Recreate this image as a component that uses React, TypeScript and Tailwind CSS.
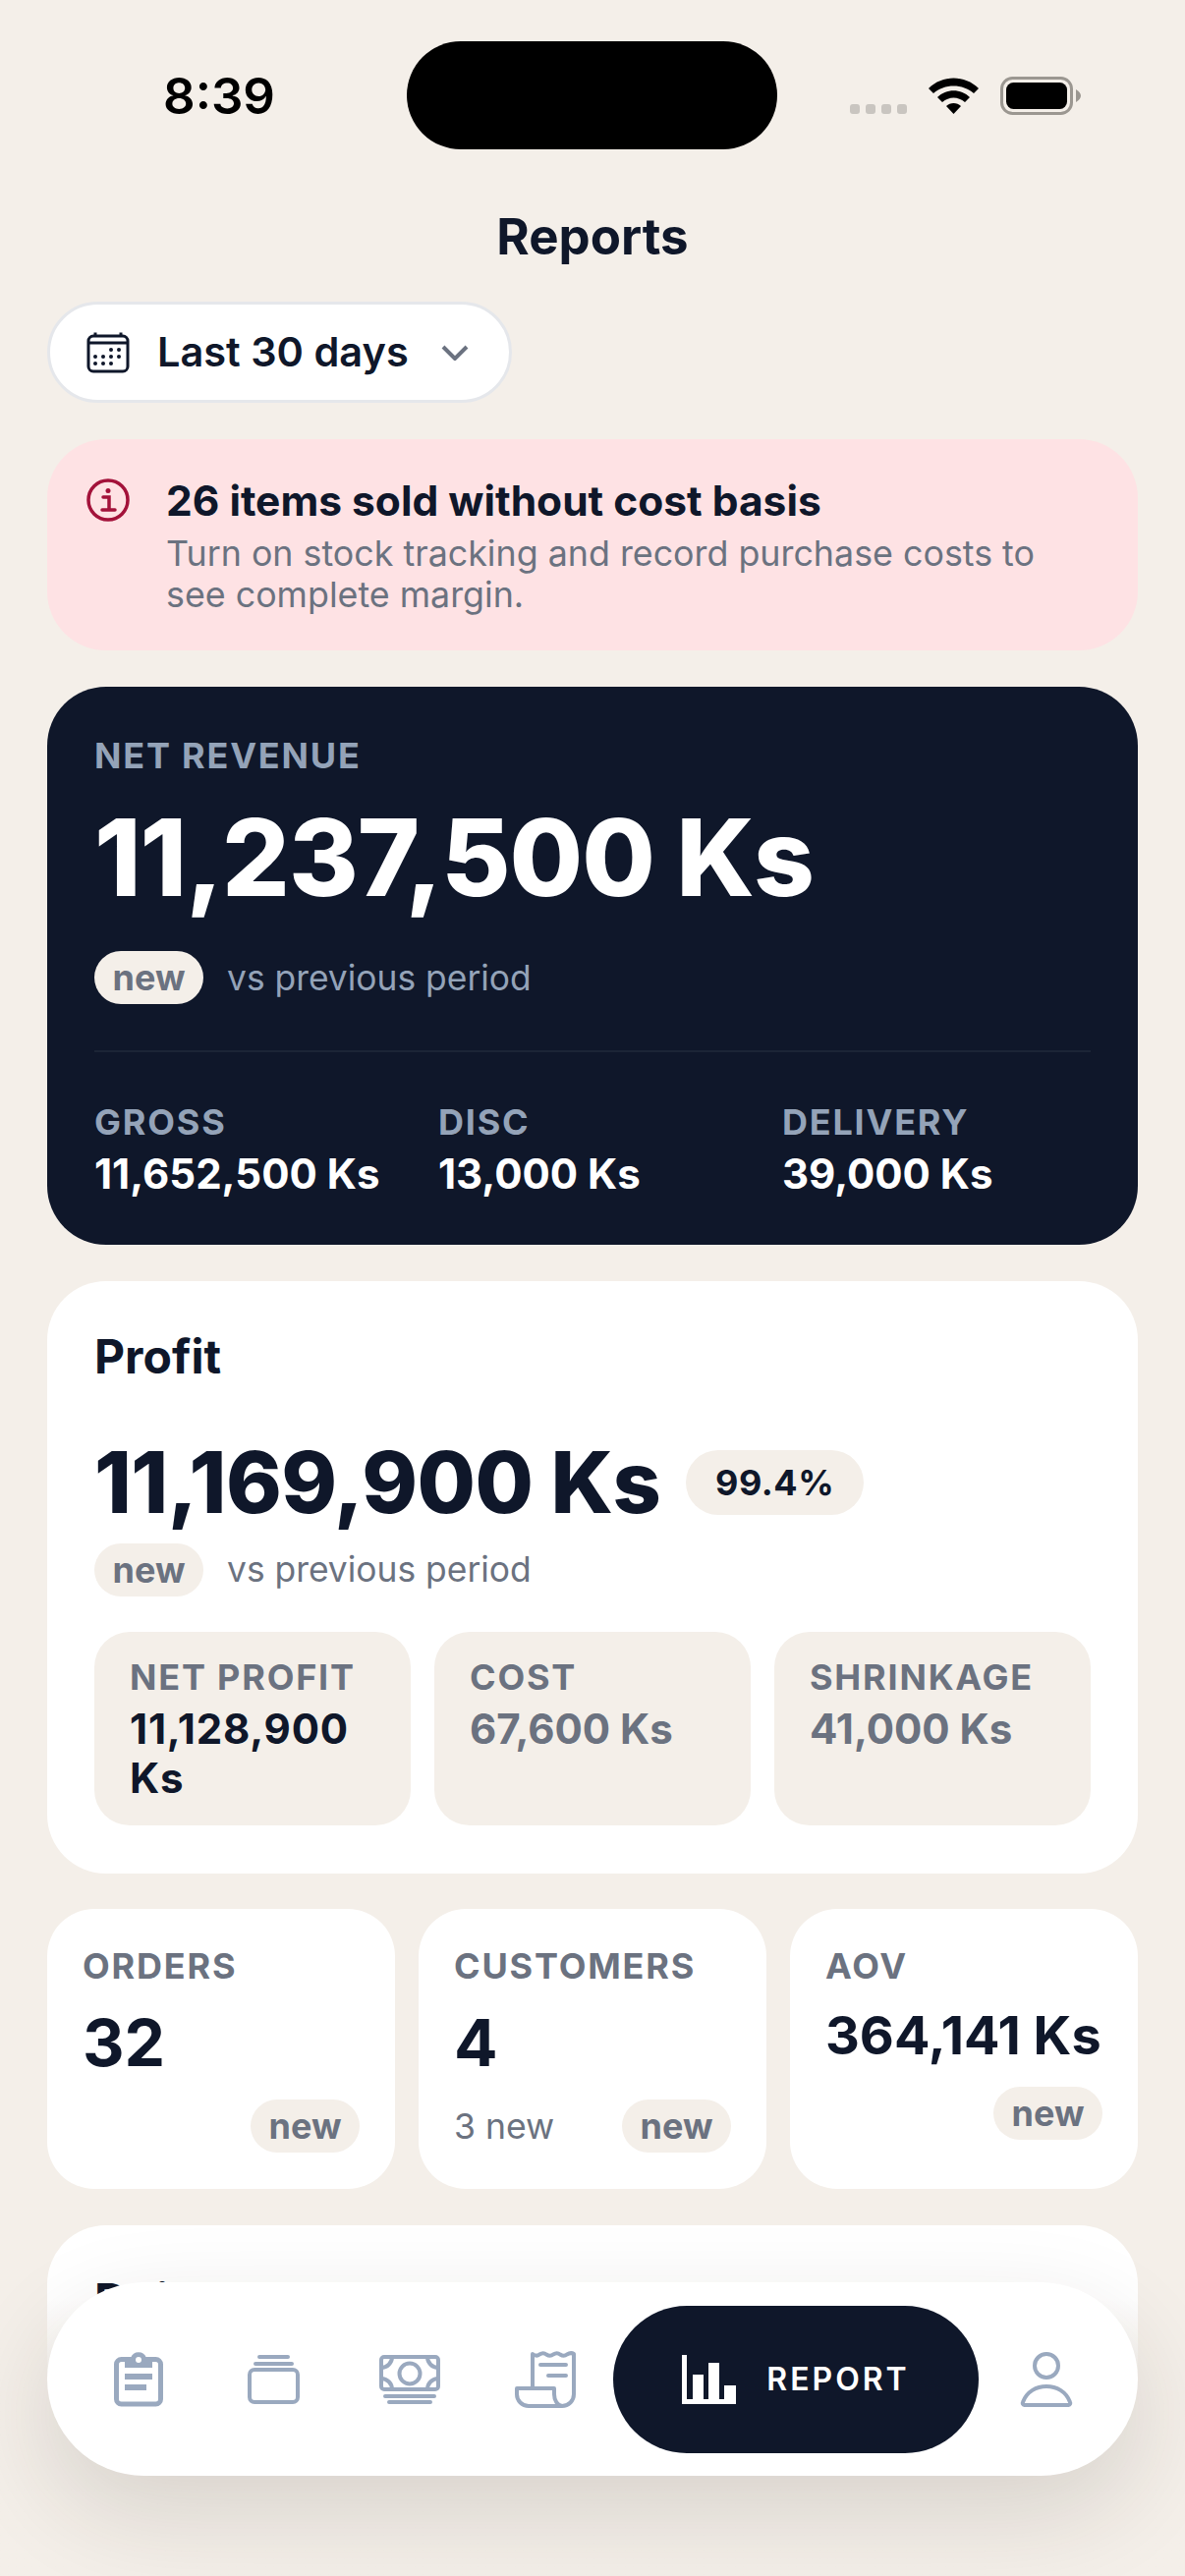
import type { ReactNode } from "react";

const font = "font-['Inter',sans-serif]";

function NewBadge({ className }: { className?: string }) {
  return (
    <span
      className={`inline-flex h-[54px] w-[111px] items-center justify-center rounded-full bg-[#f4efe9] text-[36px] font-bold text-[#6b7280] ${className ?? ""}`}
    >
      new
    </span>
  );
}

function StatusBar() {
  return (
    <div className="relative h-[152px]">
      <span className="absolute left-[166px] top-[70px] text-[51px] leading-[56px] font-semibold text-black">
        8:39
      </span>
      <div className="absolute left-[414px] top-[42px] h-[110px] w-[377px] rounded-full bg-black" />
      <div className="absolute left-[865px] top-[106px] flex gap-[6px]">
        <i className="block h-[10px] w-[10px] rounded-[3px] bg-[#c9c5c0]" />
        <i className="block h-[10px] w-[10px] rounded-[3px] bg-[#c9c5c0]" />
        <i className="block h-[10px] w-[10px] rounded-[3px] bg-[#c9c5c0]" />
        <i className="block h-[10px] w-[10px] rounded-[3px] bg-[#c9c5c0]" />
      </div>
      <svg className="absolute left-[945px] top-[79px]" width="51" height="37" viewBox="0 0 51 37">
        <path d="M0 11 C14 -3 37 -3 51 11 L46 16 C35 6 16 6 5 16 Z" fill="#000" />
        <path d="M9 20 C18 11 33 11 42 20 L37 25 C30 19 21 19 14 25 Z" fill="#000" />
        <path d="M18 29 C22 25 29 25 33 29 L25.5 37 Z" fill="#000" />
      </svg>
      <svg className="absolute left-[1018px] top-[78px]" width="82" height="39" viewBox="0 0 82 39">
        <rect x="1.5" y="1.5" width="71" height="36" rx="11" fill="none" stroke="#9b9791" strokeWidth="3" />
        <rect x="6" y="6" width="62" height="27" rx="7.5" fill="#000" />
        <path d="M77 13 C80 15 82 17 82 19.5 C82 22 80 24 77 26 Z" fill="#9b9791" />
      </svg>
    </div>
  );
}

function AmountLabel({ children, className }: { children: ReactNode; className?: string }) {
  return <div className={`text-[36px] leading-[44px] font-bold tracking-[1.8px] ${className ?? ""}`}>{children}</div>;
}

function HeroCard() {
  return (
    <section className="mx-[48px] mt-[37px] h-[568px] rounded-[60px] bg-[#0f172a] px-[48px] pt-[48px]">
      <AmountLabel className="text-[#94a3b8]">NET REVENUE</AmountLabel>
      <div className="mt-[21px] text-[108px] leading-[122px] font-extrabold tracking-[-1.1px] text-white">11,237,500 Ks</div>
      <div className="mt-[33px] flex items-center gap-[24px]">
        <NewBadge />
        <span className="mt-[2px] text-[35.4px] text-[#94a3b8]">vs previous period</span>
      </div>
      <div className="mt-[47px] h-[2px] bg-[#1c2536]" />
      <div className="mt-[49px] grid grid-cols-3 gap-[36px]">
        {[
          ["GROSS", "11,652,500 Ks"],
          ["DISC", "13,000 Ks"],
          ["DELIVERY", "39,000 Ks"],
        ].map(([label, value]) => (
          <div key={label}>
            <AmountLabel className="text-[#94a3b8]">{label}</AmountLabel>
            <div className="mt-[6px] text-[42px] leading-[50px] font-bold whitespace-nowrap text-white">{value}</div>
          </div>
        ))}
      </div>
    </section>
  );
}

function ProfitCard() {
  return (
    <section className="mx-[48px] mt-[37px] h-[603px] rounded-[60px] bg-white px-[48px] pt-[48px]">
      <div className="text-[48px] leading-[58px] font-bold text-[#0f172a]">Profit</div>
      <div className="mt-[49px] flex items-center gap-[26px]">
        <span className="text-[86px] leading-[100px] font-extrabold tracking-[-0.6px] text-[#0f172a]">11,169,900 Ks</span>
        <span className="flex h-[66px] w-[181px] items-center justify-center rounded-full bg-[#f4efe9] text-[36px] font-bold tracking-[0.5px] text-[#0f172a]">
          99.4%
        </span>
      </div>
      <div className="mt-[12px] flex items-center gap-[24px]">
        <NewBadge />
        <span className="text-[35.4px] text-[#6b7280]">vs previous period</span>
      </div>
      <div className="mt-[36px] grid grid-cols-3 gap-[24px]">
        {[
          ["NET PROFIT", "11,128,900 Ks", "tracking-[0.8px] text-[#0f172a]"],
          ["COST", "67,600 Ks", "text-[#6b7280]"],
          ["SHRINKAGE", "41,000 Ks", "text-[#6b7280]"],
        ].map(([label, value, tone]) => (
          <div key={label} className="h-[197px] rounded-[36px] bg-[#f4efe9] px-[36px] pt-[24px]">
            <AmountLabel className="text-[#6b7280]">{label}</AmountLabel>
            <div className={`mt-[6px] text-[42px] leading-[50px] font-bold ${tone}`}>{value}</div>
          </div>
        ))}
      </div>
    </section>
  );
}

function StatCard({ label, children }: { label: string; children: ReactNode }) {
  return (
    <div className="relative h-[285px] rounded-[48px] bg-white px-[36px] pt-[36px]">
      <AmountLabel className="text-[#6b7280]">{label}</AmountLabel>
      {children}
    </div>
  );
}

function ClipboardIcon() {
  return (
    <svg width="50" height="56" viewBox="0 0 50 56" className="text-[#9aa9bf]">
      <rect x="2.5" y="7.5" width="45" height="45.5" rx="5" fill="none" stroke="currentColor" strokeWidth="5" />
      <path d="M11 6 H17 A8.5 8.5 0 0 1 33 6 H39 V16 H11 Z" fill="currentColor" />
      <circle cx="25" cy="8" r="3" fill="#fff" />
      <rect x="11" y="22" width="28" height="6" fill="currentColor" />
      <rect x="11" y="33" width="22" height="6" fill="currentColor" />
    </svg>
  );
}

function StackIcon() {
  return (
    <svg width="53" height="50" viewBox="0 0 53 50" className="text-[#9aa9bf]">
      <rect x="2" y="15" width="49" height="33" rx="5" fill="none" stroke="currentColor" strokeWidth="4" />
      <path d="M12 2 H41 M8 9 H45" stroke="currentColor" strokeWidth="4" strokeLinecap="round" />
    </svg>
  );
}

function CashIcon() {
  return (
    <svg width="62" height="50" viewBox="0 0 62 50" className="text-[#9aa9bf]" fill="none" stroke="currentColor" strokeWidth="4">
      <rect x="2" y="2" width="58" height="33" rx="3" />
      <circle cx="31" cy="19" r="10.5" />
      <path d="M2 13 A11 11 0 0 0 13 2 M60 13 A11 11 0 0 1 49 2 M2 24 A11 11 0 0 1 13 35 M60 24 A11 11 0 0 0 49 35" />
      <path d="M6 42 H56 M10 48 H52" strokeLinecap="round" />
    </svg>
  );
}

function ReceiptIcon() {
  return (
    <svg width="62" height="58" viewBox="0 0 62 58" className="text-[#9aa9bf]" fill="none" stroke="currentColor" strokeWidth="4">
      <path d="M18 38 V3 Q22 6 25 3.5 Q29 1 32 3.5 Q36 6 39 3.5 Q43 1 46 3.5 Q50 6 53 3.5 Q57 1 60 3 V44 A12 12 0 0 1 48 56 H14 A12 12 0 0 1 2 44 V38 H40 V44 A9 12 0 0 0 48 56" strokeLinejoin="round" />
      <path d="M26 14 H52 M34 25 H52" strokeLinecap="round" />
    </svg>
  );
}

function ChartIcon() {
  return (
    <svg width="55" height="50" viewBox="0 0 55 50" fill="#fff">
      <path d="M0 0 H5 V45 H11 V20 H22 V45 H27 V8 H38 V45 H43 V31 H55 V50 H0 Z" />
    </svg>
  );
}

function PersonIcon() {
  return (
    <svg width="54" height="58" viewBox="0 0 54 58" className="text-[#9aa9bf]" fill="none" stroke="currentColor" strokeWidth="4">
      <circle cx="27" cy="15" r="12" />
      <path d="M4.5 55 H49.5 A2 2 0 0 0 51 52 C47 41 37 36 27 36 C17 36 7 41 3 52 A2 2 0 0 0 4.5 55 Z" strokeLinejoin="round" />
    </svg>
  );
}

function BottomNav() {
  return (
    <div className="absolute inset-x-0 top-[2340px] bottom-0 bg-gradient-to-b from-[#f4efe9]/0 to-[#f4efe9] to-[32%]">
      <nav className="absolute left-[48px] top-[-17px] flex h-[197px] w-[1110px] items-center rounded-full bg-white pl-[68px] shadow-[0_36px_100px_rgba(40,35,25,0.14)]">
        <ClipboardIcon />
        <div className="ml-[86px]"><StackIcon /></div>
        <div className="ml-[81px]"><CashIcon /></div>
        <div className="ml-[76px]"><ReceiptIcon /></div>
        <div className="ml-[38px] flex h-[150px] w-[372px] items-center justify-center gap-[31px] rounded-full bg-[#0f172a]">
          <ChartIcon />
          <span className="text-[32px] font-semibold tracking-[3px] text-white">REPORT</span>
        </div>
        <div className="ml-[42px]"><PersonIcon /></div>
      </nav>
    </div>
  );
}

export default function App() {
  return (
    <div className={`relative h-[2622px] w-[1206px] overflow-hidden bg-[#f4efe9] ${font}`}>
      <StatusBar />
      <h1 className="mt-[58px] text-center text-[51px] leading-[62px] font-bold text-[#0f172a]">Reports</h1>
      <button className="mt-[35px] ml-[48px] flex h-[103px] w-[473px] items-center rounded-full border-[3px] border-[#e5e7eb] bg-white pl-[37px]">
        <svg width="44" height="42" viewBox="0 0 44 42" fill="none" stroke="#0f172a" strokeWidth="3">
          <rect x="2" y="4" width="40" height="36" rx="5" />
          <path d="M2 11 H42 M9 0.5 V4 M35 0.5 V4" />
          <g fill="#0f172a" stroke="none">
            <circle cx="25" cy="18" r="2" /><circle cx="33" cy="18" r="2" />
            <circle cx="9" cy="25" r="2" /><circle cx="17" cy="25" r="2" /><circle cx="25" cy="25" r="2" /><circle cx="33" cy="25" r="2" />
            <circle cx="9" cy="32" r="2" /><circle cx="17" cy="32" r="2" /><circle cx="25" cy="32" r="2" />
          </g>
        </svg>
        <span className="ml-[28px] text-[41.5px] font-semibold text-[#0f172a]">Last 30 days</span>
        <svg className="ml-[33px]" width="28" height="16" viewBox="0 0 28 16" fill="none" stroke="#6b7280" strokeWidth="4">
          <path d="M2 2 L14 14 L26 2" />
        </svg>
      </button>

      <section className="mx-[48px] mt-[37px] flex h-[215px] rounded-[60px] bg-[#fee2e4] pl-[40px] pt-[38px]">
        <svg className="mt-[2px] shrink-0" width="44" height="44" viewBox="0 0 44 44" fill="none" stroke="#a3123a" strokeWidth="3.5">
          <circle cx="22" cy="22" r="20" />
          <circle cx="22" cy="12.5" r="2.5" fill="#a3123a" stroke="none" />
          <path d="M17 19 H23 V32 M16 32 H29" strokeLinecap="round" />
        </svg>
        <div className="ml-[37px] w-[930px]">
          <div className="text-[42.5px] leading-[50px] font-bold text-[#0f172a]">26 items sold without cost basis</div>
          <p className="mt-[7px] text-[35.8px] leading-[42px] text-[#6b7280]">
            Turn on stock tracking and record purchase costs to see complete margin.
          </p>
        </div>
      </section>

      <HeroCard />
      <ProfitCard />

      <div className="mx-[48px] mt-[36px] grid grid-cols-3 gap-[24px]">
        <StatCard label="ORDERS">
          <div className="mt-[16px] text-[66px] leading-[80px] font-bold text-[#0f172a]">32</div>
          <NewBadge className="absolute right-[36px] bottom-[37px]" />
        </StatCard>
        <StatCard label="CUSTOMERS">
          <div className="mt-[16px] text-[66px] leading-[80px] font-bold text-[#0f172a]">4</div>
          <span className="absolute bottom-[41px] left-[36px] text-[35.6px] leading-[44px] text-[#6b7280]">3 new</span>
          <NewBadge className="absolute right-[36px] bottom-[37px]" />
        </StatCard>
        <StatCard label="AOV">
          <div className="mt-[16px] text-[54px] leading-[66px] font-bold whitespace-nowrap text-[#0f172a]">364,141 Ks</div>
          <NewBadge className="absolute right-[36px] bottom-[50px]" />
        </StatCard>
      </div>

      {/* list card runs on under the floating nav */}
      <section className="mx-[48px] mt-[37px] h-[400px] rounded-[60px] bg-white px-[48px] pt-[48px]">
        <div className="text-[48px] leading-[58px] font-bold text-[#0f172a]">Daily revenue</div>
      </section>

      <BottomNav />
    </div>
  );
}
